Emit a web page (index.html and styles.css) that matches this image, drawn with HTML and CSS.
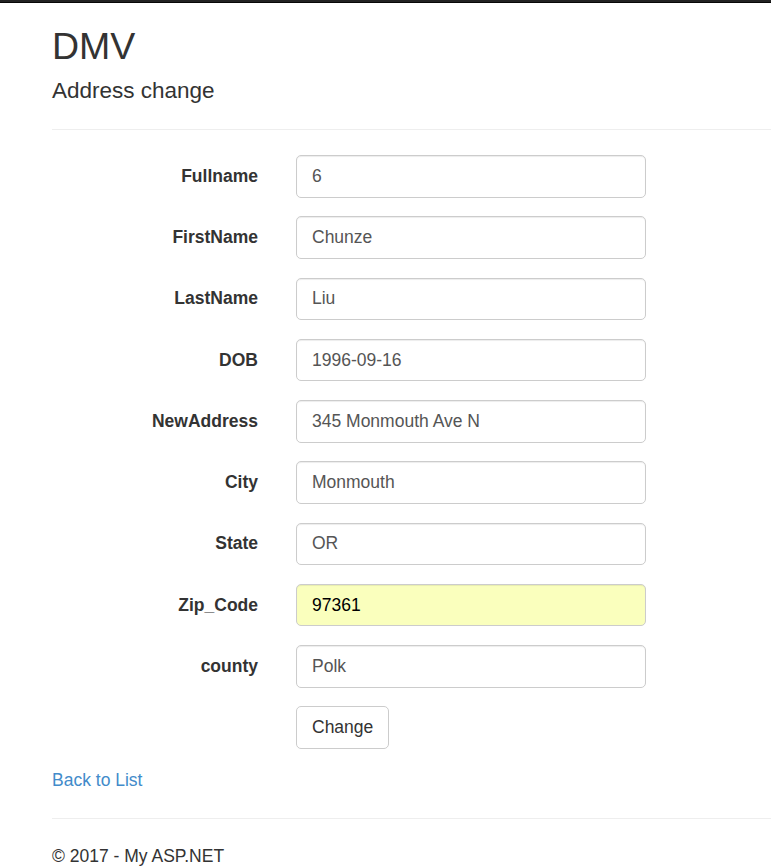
FILE: index.html
```html
<!DOCTYPE html>
<html>
<head>
<meta charset="utf-8">
<title>DMV - Address change</title>
<link rel="stylesheet" href="styles.css">
</head>
<body>
<div class="navbar-edge"></div>
<div class="container body-content">
  <h2 class="title">DMV</h2>
  <form class="form-horizontal">
    <h4 class="subtitle">Address change</h4>
    <hr class="rule">
    <div class="form-group">
      <label class="control-label">Fullname</label>
      <input class="form-control" type="text" value="6">
    </div>
    <div class="form-group">
      <label class="control-label">FirstName</label>
      <input class="form-control" type="text" value="Chunze">
    </div>
    <div class="form-group">
      <label class="control-label">LastName</label>
      <input class="form-control" type="text" value="Liu">
    </div>
    <div class="form-group">
      <label class="control-label">DOB</label>
      <input class="form-control" type="text" value="1996-09-16">
    </div>
    <div class="form-group">
      <label class="control-label">NewAddress</label>
      <input class="form-control" type="text" value="345 Monmouth Ave N">
    </div>
    <div class="form-group">
      <label class="control-label">City</label>
      <input class="form-control" type="text" value="Monmouth">
    </div>
    <div class="form-group">
      <label class="control-label">State</label>
      <input class="form-control" type="text" value="OR">
    </div>
    <div class="form-group">
      <label class="control-label">Zip_Code</label>
      <input class="form-control autofilled" type="text" value="97361">
    </div>
    <div class="form-group">
      <label class="control-label">county</label>
      <input class="form-control" type="text" value="Polk">
    </div>
    <div class="form-group">
      <span class="control-label"></span>
      <button type="button" class="btn btn-default">Change</button>
    </div>
  </form>
  <div class="back-link">
    <a href="#">Back to List</a>
  </div>
  <hr class="rule footer-rule">
  <footer class="footer">
    <p>&copy; 2017 - My ASP.NET</p>
  </footer>
</div>
</body>
</html>
```

FILE: styles.css
```css
html, body {
  margin: 0;
  padding: 0;
  background: #fff;
  overflow: hidden;
}
body {
  font-family: "Liberation Sans", Arial, Helvetica, sans-serif;
  font-size: 17.5px;
  line-height: 25px;
  color: #333;
}
.navbar-edge {
  height: 2px;
  background: #222;
  border-bottom: 1px solid #080808;
}
.container {
  padding-left: 52px;
}
.title {
  margin: 22.5px 0 12.5px;
  font-size: 37.5px;
  line-height: 41.25px;
  font-weight: 500;
  color: #333;
}
.form-horizontal {
  margin: 0;
}
.subtitle {
  margin: 12.5px 0 0;
  font-size: 22.5px;
  line-height: 24.75px;
  font-weight: 500;
  color: #333;
}
.rule {
  margin: 25px 0 0;
  border: 0;
  border-top: 1px solid #eee;
  height: 0;
}
.form-horizontal .rule {
  margin-bottom: 25px;
}
.form-group {
  display: flex;
  align-items: flex-start;
  gap: 38px;
  margin-bottom: 18.75px;
}
.control-label {
  width: 206px;
  flex: none;
  text-align: right;
  font-weight: bold;
  padding-top: 8.75px;
  line-height: 25px;
  font-size: 17.5px;
  color: #333;
}
.form-control {
  box-sizing: border-box;
  width: 350px;
  height: 42.5px;
  margin: 0;
  padding: 7.5px 15px;
  font-family: inherit;
  font-size: 17.5px;
  line-height: 25px;
  color: #555;
  background: #fff;
  border: 1px solid #ccc;
  border-radius: 5px;
  box-shadow: inset 0 1px 1px rgba(0,0,0,.075);
  outline: none;
}
.form-control.autofilled {
  background: #faffbd;
  color: #000;
}
.btn {
  box-sizing: border-box;
  height: 42.5px;
  margin: 0;
  padding: 7.5px 15px;
  font-family: inherit;
  font-size: 17.5px;
  line-height: 25px;
  border-radius: 5px;
  cursor: pointer;
}
.btn-default {
  color: #333;
  background: #fff;
  border: 1px solid #ccc;
}
.back-link a {
  color: #428bca;
  text-decoration: none;
}
.footer p {
  margin: 25px 0 12.5px;
}
```
